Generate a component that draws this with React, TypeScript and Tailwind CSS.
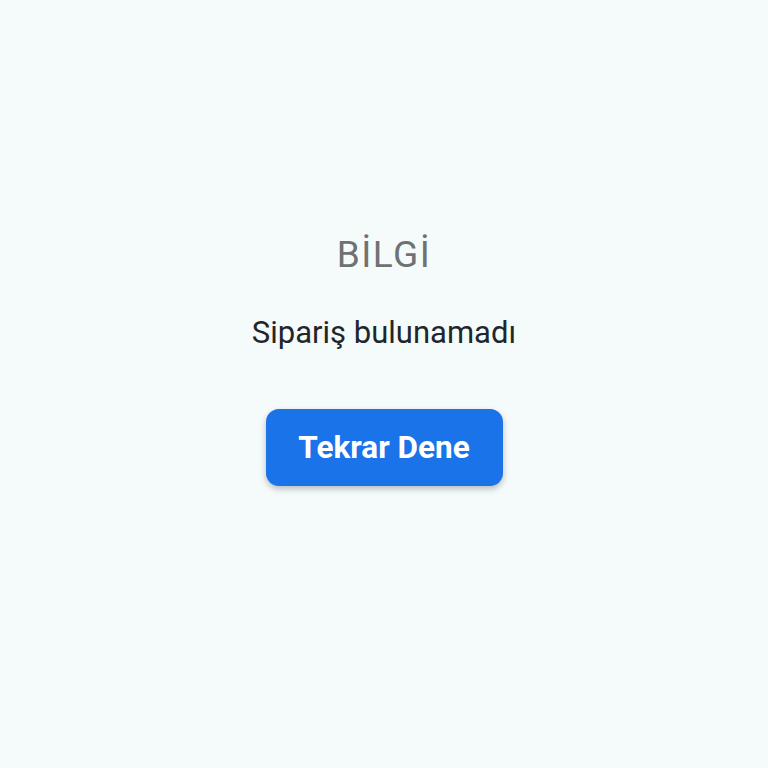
export default function App() {
  return (
    <div className="w-[768px] h-[768px] bg-[#f5fbfb] flex flex-col items-center pt-[230px]" style={{ fontFamily: "Roboto, 'Noto Sans', sans-serif" }}>
      <div className="text-[37px] leading-[50px] text-[#6f7173] tracking-[1.5px]">BİLGİ</div>
      <div className="mt-[33px] text-[31px] leading-[40px] text-[#22262a]">Sipariş bulunamadı</div>
      <button className="mt-[56px] w-[237px] h-[77px] rounded-[13px] bg-[#1a73e8] text-white text-[31.5px] font-bold shadow-[0_3px_6px_rgba(0,0,0,0.25)]">Tekrar Dene</button>
    </div>
  );
}
